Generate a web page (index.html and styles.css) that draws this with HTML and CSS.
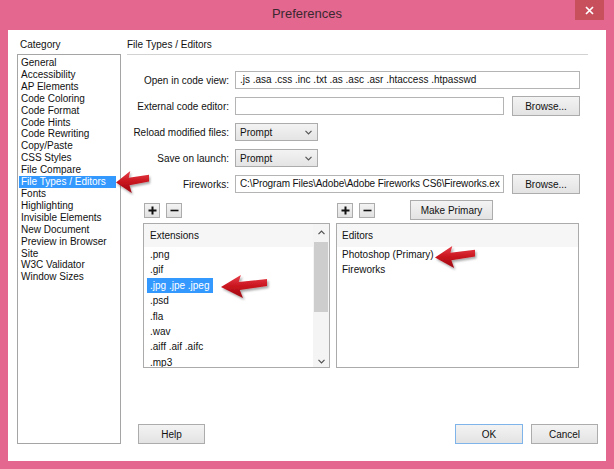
FILE: index.html
```html
<!DOCTYPE html>
<html>
<head>
<meta charset="utf-8">
<title>Preferences</title>
<link rel="stylesheet" href="styles.css">
</head>
<body>
<div class="window">
  <svg class="defs" width="0" height="0" aria-hidden="true">
    <defs>
      <linearGradient id="arrowGrad" x1="0" y1="0" x2="0" y2="1">
        <stop offset="0" stop-color="#e8404a"/>
        <stop offset="0.5" stop-color="#c8141e"/>
        <stop offset="1" stop-color="#9c0a12"/>
      </linearGradient>
      <filter id="arrowShadow" x="-20%" y="-20%" width="150%" height="160%">
        <feDropShadow dx="1.5" dy="2" stdDeviation="1.2" flood-color="#000" flood-opacity="0.35"/>
      </filter>
    </defs>
  </svg>

  <div class="titlebar">
    <span></span>
    <span class="title">Preferences</span>
    <span class="close">
      <svg width="9" height="9" viewBox="0 0 9 9"><path d="M1 1L8 8M8 1L1 8" stroke="#fff" stroke-width="1.7"/></svg>
    </span>
  </div>

  <div class="client">
    <div class="left">
      <div class="cat-label">Category</div>
      <div class="cat-list">
        <div class="cat-item">General</div>
        <div class="cat-item">Accessibility</div>
        <div class="cat-item">AP Elements</div>
        <div class="cat-item">Code Coloring</div>
        <div class="cat-item">Code Format</div>
        <div class="cat-item">Code Hints</div>
        <div class="cat-item">Code Rewriting</div>
        <div class="cat-item">Copy/Paste</div>
        <div class="cat-item">CSS Styles</div>
        <div class="cat-item">File Compare</div>
        <div class="cat-item sel">File Types / Editors</div>
        <div class="cat-item">Fonts</div>
        <div class="cat-item">Highlighting</div>
        <div class="cat-item">Invisible Elements</div>
        <div class="cat-item">New Document</div>
        <div class="cat-item">Preview in Browser</div>
        <div class="cat-item">Site</div>
        <div class="cat-item">W3C Validator</div>
        <div class="cat-item">Window Sizes</div>
      </div>
    </div>

    <div class="right">
      <div class="section-title">File Types / Editors</div>

      <div class="form">
        <label class="lbl">Open in code view:</label>
        <div class="field"><div class="input">.js .asa .css .inc .txt .as .asc .asr .htaccess .htpasswd</div></div>

        <label class="lbl">External code editor:</label>
        <div class="field"><div class="input"></div><button class="btn browse">Browse...</button></div>

        <label class="lbl">Reload modified files:</label>
        <div class="field"><div class="select"><span>Prompt</span><svg width="7" height="5" viewBox="0 0 7 5"><path d="M0.5 0.8L3.5 3.8L6.5 0.8" fill="none" stroke="#555" stroke-width="1.2"/></svg></div></div>

        <label class="lbl">Save on launch:</label>
        <div class="field"><div class="select"><span>Prompt</span><svg width="7" height="5" viewBox="0 0 7 5"><path d="M0.5 0.8L3.5 3.8L6.5 0.8" fill="none" stroke="#555" stroke-width="1.2"/></svg></div></div>

        <label class="lbl">Fireworks:</label>
        <div class="field"><div class="input tight">C:\Program Files\Adobe\Adobe Fireworks CS6\Fireworks.ex</div><button class="btn browse">Browse...</button></div>
      </div>

      <div class="lists">
        <div class="col col-ext">
          <div class="pm-row">
            <button class="pm"><svg width="9" height="9" viewBox="0 0 9 9"><path d="M0.5 4.5H8.5M4.5 0.5V8.5" stroke="#111" stroke-width="2"/></svg></button>
            <button class="pm"><svg width="9" height="9" viewBox="0 0 9 9"><path d="M0.5 4.5H8.5" stroke="#111" stroke-width="1.6"/></svg></button>
          </div>
          <div class="listbox">
            <div class="list-main">
              <div class="list-head">Extensions</div>
              <div class="list-item">.png</div>
              <div class="list-item">.gif</div>
              <div class="list-item"><span class="hl">.jpg .jpe .jpeg</span></div>
              <div class="list-item">.psd</div>
              <div class="list-item">.fla</div>
              <div class="list-item">.wav</div>
              <div class="list-item">.aiff .aif .aifc</div>
              <div class="list-item">.mp3</div>
            </div>
            <div class="scrollbar">
              <div class="sb-btn"><svg width="7" height="5" viewBox="0 0 7 5"><path d="M0.5 4.2L3.5 1.2L6.5 4.2" fill="none" stroke="#505050" stroke-width="1.2"/></svg></div>
              <div class="sb-track"><div class="sb-thumb"></div></div>
              <div class="sb-btn sb-down"><svg width="7" height="5" viewBox="0 0 7 5"><path d="M0.5 0.8L3.5 3.8L6.5 0.8" fill="none" stroke="#505050" stroke-width="1.2"/></svg></div>
            </div>
          </div>
        </div>

        <div class="col col-ed">
          <div class="pm-row">
            <button class="pm"><svg width="9" height="9" viewBox="0 0 9 9"><path d="M0.5 4.5H8.5M4.5 0.5V8.5" stroke="#111" stroke-width="2"/></svg></button>
            <button class="pm"><svg width="9" height="9" viewBox="0 0 9 9"><path d="M0.5 4.5H8.5" stroke="#111" stroke-width="1.6"/></svg></button>
            <button class="btn primary">Make Primary</button>
          </div>
          <div class="listbox">
            <div class="list-main">
              <div class="list-head ed">Editors</div>
              <div class="list-item ed">Photoshop (Primary)</div>
              <div class="list-item ed">Fireworks</div>
            </div>
          </div>
        </div>
      </div>

      <div class="footer">
        <button class="btn foot help">Help</button>
        <span class="grow"></span>
        <button class="btn foot ok">OK</button>
        <button class="btn foot">Cancel</button>
      </div>
    </div>
  </div>

  <svg class="arrow a1" viewBox="0 0 44 24" preserveAspectRatio="none"><polygon points="0,13 19,1 17,8 44,5 44,12 18,16 21,24" fill="url(#arrowGrad)" filter="url(#arrowShadow)"/></svg>
  <svg class="arrow a2" viewBox="0 0 44 24" preserveAspectRatio="none"><polygon points="0,13 19,1 17,8 44,5 44,12 18,16 21,24" fill="url(#arrowGrad)" filter="url(#arrowShadow)"/></svg>
  <svg class="arrow a3" viewBox="0 0 44 24" preserveAspectRatio="none"><polygon points="0,13 19,1 17,8 44,5 44,12 18,16 21,24" fill="url(#arrowGrad)" filter="url(#arrowShadow)"/></svg>
</div>
</body>
</html>
```
FILE: styles.css
```css
* { box-sizing: border-box; }

body {
  margin: 0;
  font-family: "Liberation Sans", Arial, sans-serif;
  font-size: 10px;
  color: #111;
}

.window {
  position: relative;
  width: 614px;
  height: 469px;
  background: #e3678f;
  display: flex;
  flex-direction: column;
  padding: 0 8px 8px;
}

.defs { position: absolute; width: 0; height: 0; }

.titlebar {
  height: 30px;
  margin: 0 -8px;
  display: grid;
  grid-template-columns: 1fr auto 1fr;
  align-items: start;
}

.title {
  font-size: 13px;
  line-height: 28px;
  color: #3b2730;
}

.close {
  justify-self: end;
  width: 29px;
  height: 20px;
  margin-right: 10px;
  background: #c7505c;
  display: flex;
  align-items: center;
  justify-content: center;
}

.client {
  flex: 1;
  background: #fff;
  display: flex;
  gap: 6px;
  padding: 7px 8px 17px 9px;
}

.left {
  width: 104px;
  flex-shrink: 0;
  display: flex;
  flex-direction: column;
}

.cat-label {
  line-height: 16px;
  padding-left: 3px;
  margin-bottom: 1px;
}

.cat-list {
  flex: 1;
  border: 1px solid #a5a5a5;
  padding: 2px 4px 0 1px;
}

.cat-item {
  line-height: 11.9px;
  padding-left: 2px;
  white-space: nowrap;
}

.cat-item.sel {
  background: #3399ff;
  color: #fff;
}

.right {
  flex: 1;
  min-width: 0;
  display: flex;
  flex-direction: column;
}

.section-title {
  line-height: 16px;
  padding-bottom: 1px;
  border-bottom: 1px solid #d2d2d2;
  margin-right: 10px;
}

.form {
  display: grid;
  grid-template-columns: 102px minmax(0, 1fr);
  grid-auto-rows: 20px;
  column-gap: 6px;
  row-gap: 6px;
  align-items: center;
  margin: 15px 18px 0 0;
}

.lbl {
  text-align: right;
  white-space: nowrap;
}

.field {
  display: flex;
  align-items: center;
  gap: 8px;
  min-width: 0;
}

.input {
  flex: 1;
  min-width: 0;
  height: 18px;
  border: 1px solid #b4b4b4;
  padding: 0 4px;
  line-height: 16px;
  white-space: nowrap;
  overflow: hidden;
  background: #fff;
}

.input.tight {
  padding-right: 1px;
  letter-spacing: -0.12px;
}

.select {
  width: 83px;
  height: 18px;
  border: 1px solid #acacac;
  background: linear-gradient(#f3f3f3, #e4e4e4);
  padding: 0 5px 0 4px;
  display: flex;
  align-items: center;
  justify-content: space-between;
}

.btn {
  font: inherit;
  color: #111;
  height: 20px;
  padding: 0;
  border: 1px solid #acacac;
  background: linear-gradient(#f3f3f3, #e3e3e3);
  display: flex;
  align-items: center;
  justify-content: center;
  flex-shrink: 0;
}

.browse { width: 68px; }

.lists {
  display: flex;
  gap: 6px;
  margin: 6px 19px 0 16px;
}

.col-ext { width: 187px; flex-shrink: 0; }
.col-ed { flex: 1; min-width: 0; }

.pm-row {
  height: 20px;
  display: flex;
  align-items: center;
  gap: 6px;
  padding-left: 1px;
}

.pm {
  width: 16px;
  height: 15px;
  padding: 0;
  border: 1px solid #acacac;
  background: linear-gradient(#f3f3f3, #e1e1e1);
  display: flex;
  align-items: center;
  justify-content: center;
}

.primary {
  width: 83px;
  margin-left: 29px;
}

.listbox {
  margin-top: 3px;
  height: 145px;
  border: 1px solid #ababab;
  display: flex;
  overflow: hidden;
}

.list-main {
  flex: 1;
  overflow: hidden;
}

.list-head {
  height: 23px;
  line-height: 23px;
  padding-left: 6px;
  background: #f6f6f6;
}

.list-item {
  line-height: 15.4px;
  height: 15.4px;
  padding-left: 6px;
  white-space: nowrap;
}

.list-head.ed, .list-item.ed { padding-left: 5px; }

.hl {
  display: inline-block;
  background: #3399ff;
  color: #fff;
  padding: 0 3px;
  margin-left: -3px;
  height: 15.4px;
}

.scrollbar {
  width: 16px;
  display: flex;
  flex-direction: column;
  background: #f4f4f4;
}

.sb-btn {
  height: 17px;
  display: flex;
  align-items: center;
  justify-content: center;
}

.sb-down { align-items: flex-end; padding-bottom: 3px; }

.sb-track {
  flex: 1;
  padding: 1px 1px 0;
}

.sb-thumb {
  height: 70px;
  background: #cdcdcd;
}

.footer {
  margin-top: auto;
  display: flex;
  align-items: center;
  gap: 8px;
}

.foot { width: 67px; }
.help { margin-left: 11px; }
.ok { width: 68px; border-color: #7eb4ea; }
.grow { flex: 1; }

.arrow {
  position: absolute;
  overflow: visible;
}

.a1 { left: 116px; top: 170px; width: 33px; height: 23px; }
.a2 { left: 221px; top: 274px; width: 46px; height: 24px; }
.a3 { left: 435px; top: 245px; width: 40px; height: 23px; }
```
